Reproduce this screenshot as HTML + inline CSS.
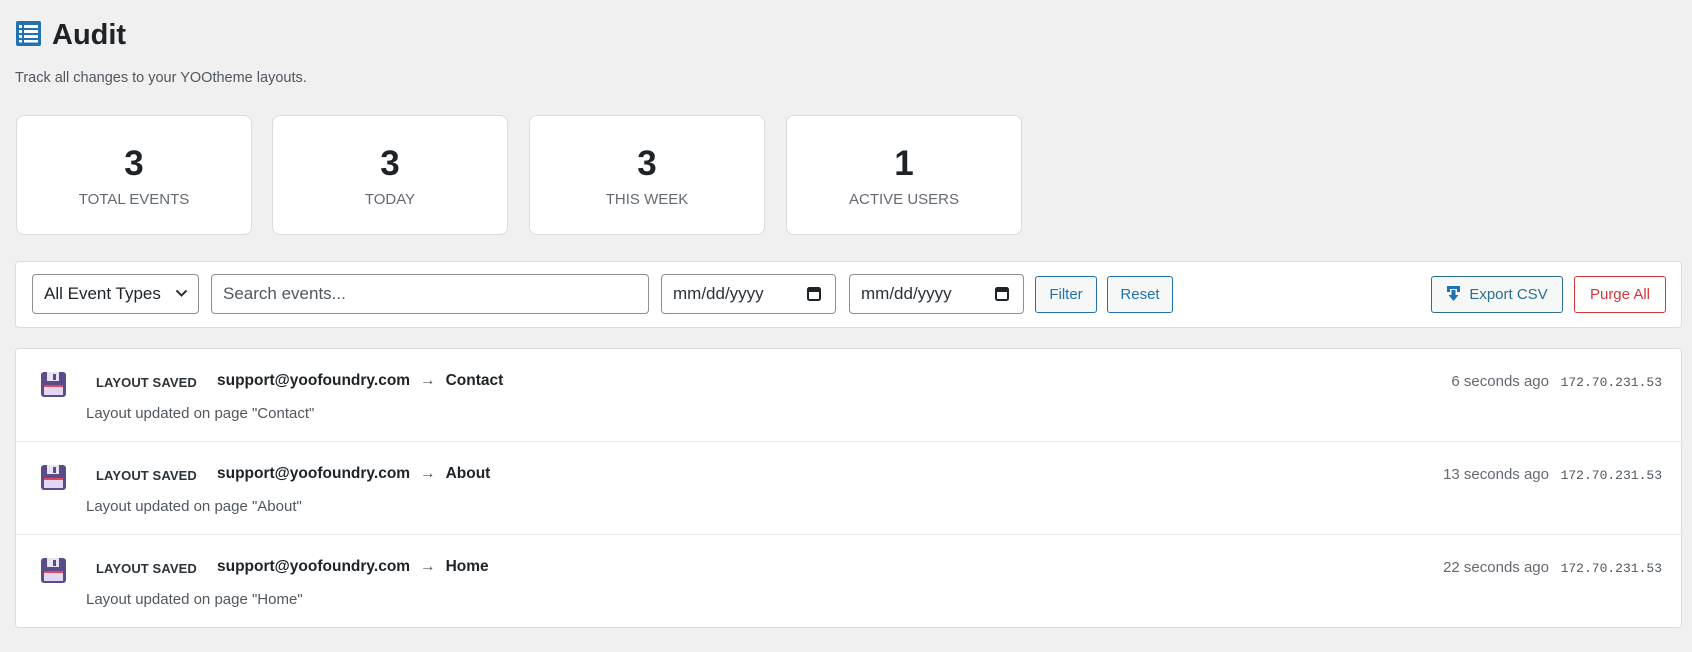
<!DOCTYPE html>
<html><head><meta charset="utf-8">
<style>
*{box-sizing:border-box;margin:0;padding:0}
body{width:1692px;height:652px;background:#f0f0f1;font-family:"Liberation Sans",sans-serif;color:#1d2327;position:relative;overflow:hidden}
.abs{position:absolute}
h1{position:absolute;left:52px;top:16px;font-size:29px;font-weight:600;line-height:38px;color:#1d2327}
.sub{left:15px;top:70px;font-size:14.5px;color:#50575e}
.card{position:absolute;top:115px;width:236px;height:120px;background:#fff;border:1px solid #dcdcde;border-radius:8px;text-align:center}
.card .n{position:absolute;left:0;right:0;top:30px;font-size:35px;font-weight:700;line-height:36px}
.card .l{position:absolute;left:0;right:0;top:76px;font-size:15px;color:#646970;line-height:16px}
.bar{left:15px;top:261px;width:1667px;height:67px;background:#fff;border:1px solid #dcdcde;border-radius:4px}
.inp{position:absolute;top:274px;height:40px;border:1px solid #8c8f94;border-radius:4px;background:#fff;font-size:17px;line-height:38px;padding-left:11px;color:#2c3338}
.btn{position:absolute;top:276px;height:37px;border:1px solid #2271b1;border-radius:3px;background:#f6f7f7;font-size:15px;line-height:35px;text-align:center;color:#2271b1}
.list{left:15px;top:348px;width:1667px;height:280px;background:#fff;border:1px solid #dcdcde;border-radius:4px}
.row{position:absolute;left:0;width:100%;height:93px;border-bottom:1px solid #ececec}
.row .ic{position:absolute;left:25px;top:23px}
.row .tag{position:absolute;left:80px;top:26px;font-size:13px;font-weight:600;color:#2c3338;letter-spacing:.1px}
.row .em{position:absolute;left:201px;top:23px;font-size:15.5px;font-weight:600;color:#1d2327}
.row .em span{font-weight:400;margin:0 10px;color:#50575e}
.row .d{position:absolute;left:70px;top:56px;font-size:15px;color:#50575e}
.row .t{position:absolute;right:132px;top:24px;font-size:15px;color:#646970}
.row .ip{position:absolute;right:19px;top:26px;font-size:13px;font-family:"Liberation Mono",monospace;color:#50575e}
</style></head><body>
<svg class="abs" style="left:16px;top:21px" width="25" height="25" viewBox="0 0 25 25">
<rect x="0" y="0" width="25" height="25" rx="2" fill="#2271b1"/>
<g fill="#fff"><rect x="3" y="4" width="3" height="3"/><rect x="8" y="4" width="14" height="3"/>
<rect x="3" y="9" width="3" height="3"/><rect x="8" y="9" width="14" height="3"/>
<rect x="3" y="14" width="3" height="3"/><rect x="8" y="14" width="14" height="3"/>
<rect x="3" y="19" width="3" height="2.5"/><rect x="8" y="19" width="14" height="2.5"/></g>
</svg>
<h1>Audit</h1>
<div class="abs sub">Track all changes to your YOOtheme layouts.</div>

<div class="card" style="left:16px"><div class="n">3</div><div class="l">TOTAL EVENTS</div></div>
<div class="card" style="left:272px"><div class="n">3</div><div class="l">TODAY</div></div>
<div class="card" style="left:529px"><div class="n">3</div><div class="l">THIS WEEK</div></div>
<div class="card" style="left:786px"><div class="n">1</div><div class="l">ACTIVE USERS</div></div>

<div class="abs bar"></div>
<div class="inp" style="left:32px;width:167px;color:#1d2327">All Event Types
<svg class="abs" style="right:10px;top:14px" width="13" height="9" viewBox="0 0 13 9"><path d="M1.5 1.5 L6.5 6.5 L11.5 1.5" stroke="#2c3338" stroke-width="2" fill="none"/></svg></div>
<div class="inp" style="left:211px;width:438px;color:#50575e">Search events...</div>
<div class="inp" style="left:661px;width:175px">mm/dd/yyyy
<svg class="abs" style="right:14px;top:11px" width="14" height="16" viewBox="0 0 14 16"><rect x="1" y="2" width="12" height="12" rx="1.5" fill="none" stroke="#1d2327" stroke-width="2"/><rect x="1" y="2" width="12" height="4" fill="#1d2327"/></svg></div>
<div class="inp" style="left:849px;width:175px">mm/dd/yyyy
<svg class="abs" style="right:14px;top:11px" width="14" height="16" viewBox="0 0 14 16"><rect x="1" y="2" width="12" height="12" rx="1.5" fill="none" stroke="#1d2327" stroke-width="2"/><rect x="1" y="2" width="12" height="4" fill="#1d2327"/></svg></div>
<div class="btn" style="left:1035px;width:62px">Filter</div>
<div class="btn" style="left:1107px;width:66px">Reset</div>
<div class="btn" style="left:1431px;width:132px;border-color:#2c6e8e;color:#2c6e8e"><svg style="vertical-align:-3px;margin-right:8px" width="15" height="17" viewBox="0 0 15 17"><path d="M1 1h13v6h-3V4H4v3H1z" fill="#2271b1"/><path d="M5.5 5h4v5h3l-5 6-5-6h3z" fill="#2271b1"/></svg>Export CSV</div>
<div class="btn" style="left:1574px;width:92px;border-color:#d63638;color:#d63638;background:#fff">Purge All</div>

<div class="abs list">
<div class="row" style="top:0">
<svg class="ic" width="25" height="25" viewBox="0 0 25 25"><rect x="0" y="0" width="25" height="25" rx="3" fill="#5b4b8a"/><rect x="6" y="0" width="12" height="9" fill="#e9e4f4"/><rect x="12" y="2" width="3" height="6" fill="#5b4b8a"/><rect x="3" y="13" width="19" height="10" fill="#e2d6f0"/><rect x="3" y="13" width="19" height="2" fill="#e0475b"/></svg>
<div class="tag">LAYOUT SAVED</div><div class="em">support@yoofoundry.com<span>→</span>Contact</div>
<div class="d">Layout updated on page "Contact"</div><div class="t">6 seconds ago</div><div class="ip">172.70.231.53</div></div>
<div class="row" style="top:93px">
<svg class="ic" width="25" height="25" viewBox="0 0 25 25"><rect x="0" y="0" width="25" height="25" rx="3" fill="#5b4b8a"/><rect x="6" y="0" width="12" height="9" fill="#e9e4f4"/><rect x="12" y="2" width="3" height="6" fill="#5b4b8a"/><rect x="3" y="13" width="19" height="10" fill="#e2d6f0"/><rect x="3" y="13" width="19" height="2" fill="#e0475b"/></svg>
<div class="tag">LAYOUT SAVED</div><div class="em">support@yoofoundry.com<span>→</span>About</div>
<div class="d">Layout updated on page "About"</div><div class="t">13 seconds ago</div><div class="ip">172.70.231.53</div></div>
<div class="row" style="top:186px;border-bottom:none">
<svg class="ic" width="25" height="25" viewBox="0 0 25 25"><rect x="0" y="0" width="25" height="25" rx="3" fill="#5b4b8a"/><rect x="6" y="0" width="12" height="9" fill="#e9e4f4"/><rect x="12" y="2" width="3" height="6" fill="#5b4b8a"/><rect x="3" y="13" width="19" height="10" fill="#e2d6f0"/><rect x="3" y="13" width="19" height="2" fill="#e0475b"/></svg>
<div class="tag">LAYOUT SAVED</div><div class="em">support@yoofoundry.com<span>→</span>Home</div>
<div class="d">Layout updated on page "Home"</div><div class="t">22 seconds ago</div><div class="ip">172.70.231.53</div></div>
</div>
</body></html>
